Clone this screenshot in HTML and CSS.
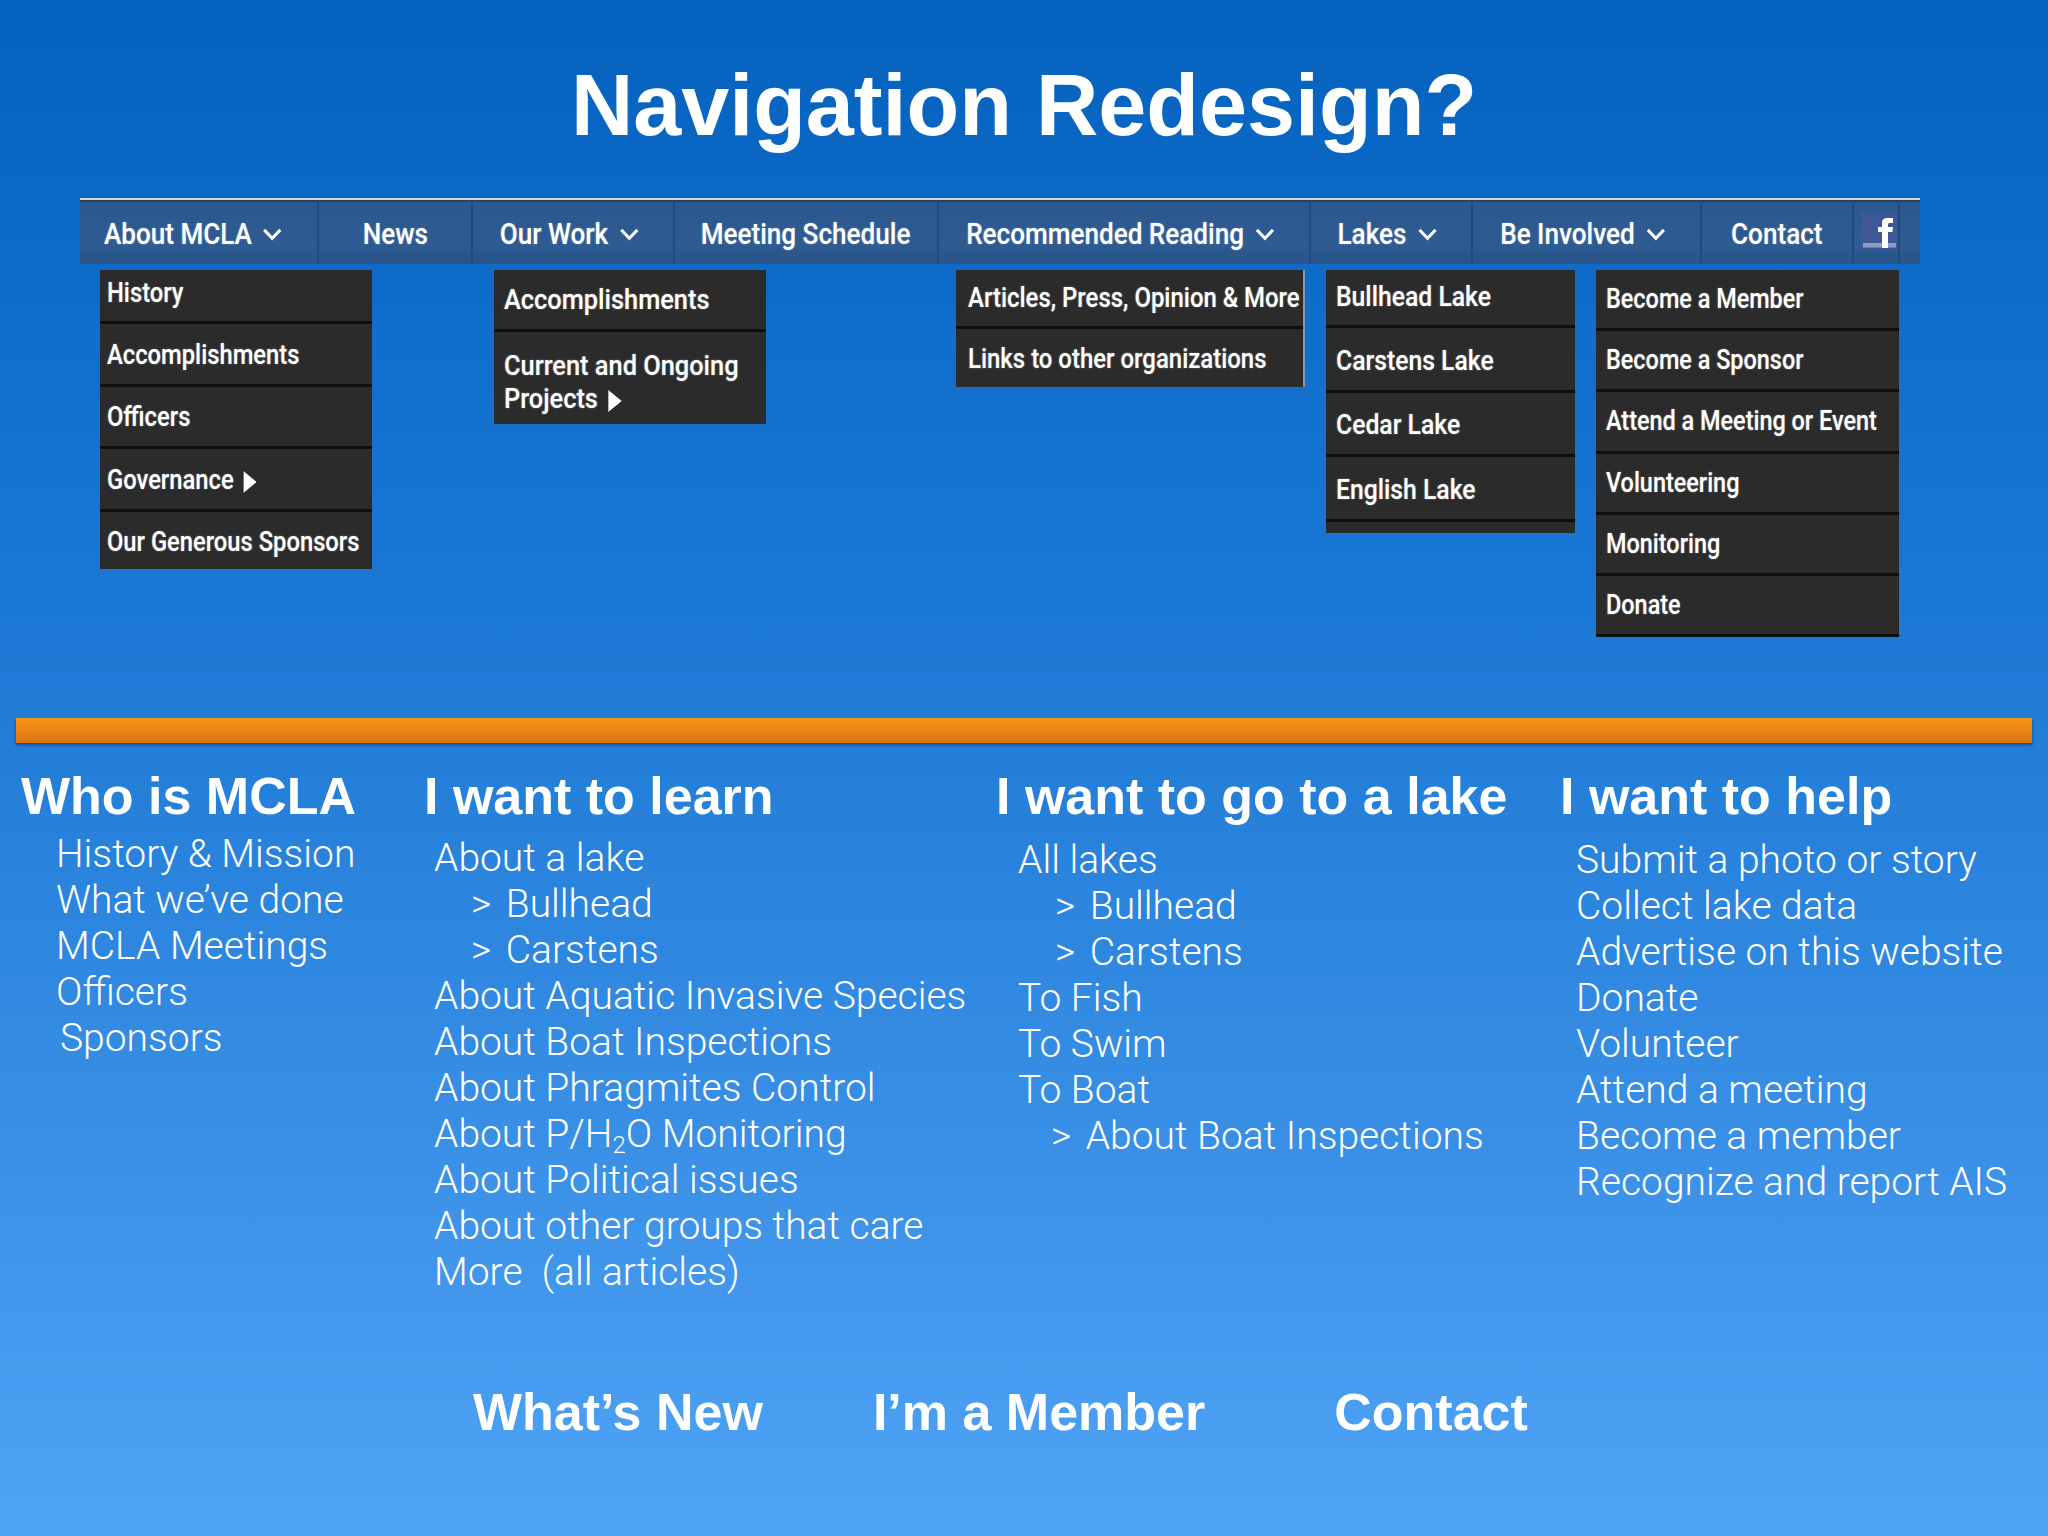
FILE: index.html
```html
<!DOCTYPE html>
<html lang="en">
<head>
<meta charset="utf-8">
<title>Navigation Redesign?</title>
<link rel="stylesheet" href="styles.css">
</head>
<body>
<header class="title-area"><h1 class="title">Navigation Redesign?</h1></header>

<nav class="navbar">
  <a class="nav-item has-menu first"><span class="nav-inner">About MCLA <svg class="chev" viewBox="0 0 16 10" preserveAspectRatio="none"><path d="M1.500 1.500l6.500 6.500 6.500-6.500"/></svg></span></a>
  <a class="nav-item"><span class="nav-inner">News</span></a>
  <a class="nav-item has-menu"><span class="nav-inner">Our Work <svg class="chev" viewBox="0 0 16 10" preserveAspectRatio="none"><path d="M1.500 1.500l6.500 6.500 6.500-6.500"/></svg></span></a>
  <a class="nav-item"><span class="nav-inner">Meeting Schedule</span></a>
  <a class="nav-item has-menu"><span class="nav-inner">Recommended Reading <svg class="chev" viewBox="0 0 16 10" preserveAspectRatio="none"><path d="M1.500 1.500l6.500 6.500 6.500-6.500"/></svg></span></a>
  <a class="nav-item has-menu"><span class="nav-inner">Lakes <svg class="chev" viewBox="0 0 16 10" preserveAspectRatio="none"><path d="M1.500 1.500l6.500 6.500 6.500-6.500"/></svg></span></a>
  <a class="nav-item has-menu"><span class="nav-inner">Be Involved <svg class="chev" viewBox="0 0 16 10" preserveAspectRatio="none"><path d="M1.500 1.500l6.500 6.500 6.500-6.500"/></svg></span></a>
  <a class="nav-item"><span class="nav-inner">Contact</span></a>
  <a class="nav-item fb-cell">
    <svg class="fb" viewBox="0 0 36 36"><rect width="36" height="36" fill="#3f5797"/><rect x="2" y="30" width="33" height="4.500" fill="#8f9cc4"/><path d="M21 35V19h-4v-5h4v-4c0-4 2.500-5 6-5h5v5h-3c-1.500 0-2 .5-2 2v2h5l-.6 5h-4.400v16z" fill="#fff"/></svg>
  </a>
</nav>

<section class="menus">
  <ul class="menu m1">
    <li><span class="lbl">History</span></li>
    <li><span class="lbl">Accomplishments</span></li>
    <li><span class="lbl">Officers</span></li>
    <li><span class="lbl">Governance <svg class="tri" viewBox="0 0 10 20" preserveAspectRatio="none"><path d="M0 0l10 10-10 10z"/></svg></span></li>
    <li class="end"><span class="lbl">Our Generous Sponsors</span></li>
  </ul>
  <ul class="menu m2">
    <li class="r1"><span class="lbl">Accomplishments</span></li>
    <li class="r2"><span class="lbl">Current and Ongoing<br>Projects <svg class="tri" viewBox="0 0 10 20" preserveAspectRatio="none"><path d="M0 0l10 10-10 10z"/></svg></span></li>
  </ul>
  <ul class="menu m3">
    <li><span class="lbl">Articles, Press, Opinion &amp; More</span></li>
    <li class="end"><span class="lbl">Links to other organizations</span></li>
  </ul>
  <ul class="menu m4">
    <li><span class="lbl">Bullhead Lake</span></li>
    <li><span class="lbl">Carstens Lake</span></li>
    <li><span class="lbl">Cedar Lake</span></li>
    <li><span class="lbl">English Lake</span></li>
    <li class="stub"></li>
  </ul>
  <ul class="menu m5">
    <li><span class="lbl">Become a Member</span></li>
    <li><span class="lbl">Become a Sponsor</span></li>
    <li><span class="lbl">Attend a Meeting or Event</span></li>
    <li><span class="lbl">Volunteering</span></li>
    <li><span class="lbl">Monitoring</span></li>
    <li><span class="lbl">Donate</span></li>
  </ul>
</section>

<div class="rule"></div>

<section class="columns">
  <div class="col c1">
    <h2 class="col-head">Who is MCLA</h2>
    <ul class="links">
      <li>History &amp; Mission</li>
      <li>What we’ve done</li>
      <li>MCLA Meetings</li>
      <li>Officers</li>
      <li class="nudge">Sponsors</li>
    </ul>
  </div>
  <div class="col c2">
    <h2 class="col-head">I want to learn</h2>
    <ul class="links">
      <li>About a lake</li>
      <li class="sub-item">&gt; <span class="sub-text">Bullhead</span></li>
      <li class="sub-item">&gt; <span class="sub-text">Carstens</span></li>
      <li>About Aquatic Invasive Species</li>
      <li>About Boat Inspections</li>
      <li>About Phragmites Control</li>
      <li>About P/H<sub class="low">2</sub>O Monitoring</li>
      <li>About Political issues</li>
      <li>About other groups that care</li>
      <li>More&nbsp; (all articles)</li>
    </ul>
  </div>
  <div class="col c3">
    <h2 class="col-head">I want to go to a lake</h2>
    <ul class="links">
      <li>All lakes</li>
      <li class="sub-item">&gt; <span class="sub-text">Bullhead</span></li>
      <li class="sub-item">&gt; <span class="sub-text">Carstens</span></li>
      <li>To Fish</li>
      <li>To Swim</li>
      <li>To Boat</li>
      <li class="sub-item tight">&gt; <span class="sub-text">About Boat Inspections</span></li>
    </ul>
  </div>
  <div class="col c4">
    <h2 class="col-head">I want to help</h2>
    <ul class="links">
      <li>Submit a photo or story</li>
      <li>Collect lake data</li>
      <li>Advertise on this website</li>
      <li>Donate</li>
      <li>Volunteer</li>
      <li>Attend a meeting</li>
      <li>Become a member</li>
      <li>Recognize and report AIS</li>
    </ul>
  </div>
</section>

<footer class="bottom">
  <a class="bottom-link">What’s New</a>
  <a class="bottom-link">I’m a Member</a>
  <a class="bottom-link">Contact</a>
</footer>
</body>
</html>
```

FILE: styles.css
```css
* { box-sizing: border-box; }
html, body { margin: 0; padding: 0; }
body {
  width: 2048px;
  height: 1536px;
  overflow: hidden;
  background: linear-gradient(180deg, #0461bd 0%, #1b78d4 40%, #3a90e6 75%, #50a4f7 100%);
  font-family: "Liberation Sans", Arial, sans-serif;
  color: #fff;
}
ul { list-style: none; margin: 0; padding: 0; }

.title-area { height: 198px; padding-top: 54px; text-align: center; }
.title { margin: 0; font-size: 86.300px; line-height: 102px; font-weight: 700; }

.navbar {
  display: grid;
  grid-template-columns: 239px 154px 202px 264px 372px 162px 229px 152px 46px;
  width: 1840px;
  height: 66px;
  margin-left: 80px;
  border-top: 2px solid #c9d8ea;
  background: linear-gradient(180deg, #2b588e 0%, #2d5b92 70%, #27528a 100%);
  font-family: Roboto, sans-serif;
  font-weight: 500;
  font-size: 29px;
  box-shadow: inset 0 2px 0 #3a3f46;
}
.nav-item {
  display: flex;
  align-items: center;
  justify-content: center;
  padding-top: 4px;
  border-right: 2px solid #1e4a80;
  white-space: nowrap;
  text-shadow: 0 0 2px rgba(255,255,255,.35);
}
.nav-inner {
  display: inline-flex;
  flex: none;
  align-items: center;
  gap: 12px;
  transform: scaleX(.9);
}
.has-menu { padding-right: 8px; }
.has-menu.first { padding-right: 11px; }
.chev { width: 22px; height: 13px; fill: none; stroke: #fff; stroke-width: 2.400; }
.fb-cell { justify-content: flex-start; padding: 0 0 0 7px; }
.fb { width: 36px; height: 36px; margin-top: -2px; }

.menus {
  display: flex;
  align-items: flex-start;
  height: 454px;
  padding: 6px 0 0 100px;
  font-family: Roboto, sans-serif;
  font-weight: 500;
  white-space: nowrap;
}
.menu { background: #2b2b2b; font-size: 27px; text-shadow: 0 0 2px rgba(255,255,255,.4); }
.menu li {
  display: flex;
  align-items: center;
  border-bottom: 3px solid #0e0e0e;
  padding-left: 7px;
}
.menu li.end { border-bottom: 0; }
.lbl { display: inline-block; flex: none; transform-origin: left center; }
.tri { width: 15px; height: 22px; margin-left: 4px; fill: #fff; vertical-align: -4px; }

.m1 { width: 272px; }
.m1 .lbl { transform: scaleX(.88); }
.m1 li { height: 62.500px; padding-top: 2px; }
.m1 li:first-child { height: 54px; padding-top: 0; padding-bottom: 6px; }
.m1 li.end { height: 57px; padding-top: 3px; }

.m2 { width: 272px; margin-left: 122px; font-size: 28px; }
.m2 .lbl { transform: scaleX(.906); }
.m2 li { padding-left: 10px; }
.m2 li.r1 { height: 62px; }
.m2 li.r2 { display: block; height: 92px; padding-top: 17px; line-height: 33px; border-bottom: 0; }

.m3 { width: 349px; margin-left: 190px; border-right: 2px solid #8a98a8; }
.m3 .lbl { transform: scaleX(.887); }
.m3 li { height: 59px; padding-left: 12px; }
.m3 li.end { height: 58px; padding-top: 1px; }

.m4 { width: 249px; margin-left: 21px; }
.m4 .lbl { transform: scaleX(.916); }
.m4 li { height: 64.500px; padding-left: 10px; padding-top: 4px; }
.m4 li:first-child { height: 58px; padding-top: 0; padding-bottom: 2px; }
.m4 li.stub { height: 11px; border-bottom: 0; padding-top: 0; }

.m5 { width: 303px; margin-left: 21px; }
.m5 .lbl { transform: scaleX(.868); }
.m5 li { height: 61.200px; padding-left: 10px; }

.rule {
  width: 2016px;
  height: 25px;
  margin-left: 16px;
  background: linear-gradient(180deg, #f59518 0%, #ea8515 50%, #d9730f 100%);
  box-shadow: 0 2px 3px rgba(10,40,80,.6);
}

.columns { display: flex; align-items: flex-start; padding: 23px 0 0 21px; height: 639px; }
.col-head { margin: 0; font-size: 52px; line-height: 60px; font-weight: 700; white-space: nowrap; }
.links { font-family: Roboto, sans-serif; font-weight: 300; font-size: 39px; line-height: 46px; white-space: nowrap; }
.c1 { width: 403px; }
.c2 { width: 572px; }
.c3 { width: 564px; }
.c4 { width: 460px; }
.c1 .links { padding: 5px 0 0 35px; }
.c2 .links { padding: 9px 0 0 10px; }
.c3 .links { padding: 11px 0 0 22px; }
.c4 .links { padding: 11px 0 0 16px; }
.nudge { padding-left: 4px; }
.sub-item { padding-left: 37px; }
.sub-item.tight { padding-left: 33px; }
.sub-text { margin-left: 5px; }
.low { font-size: 24px; line-height: 0; vertical-align: -6px; }

.bottom { display: flex; padding-left: 473px; font-size: 52px; font-weight: 700; line-height: 60px; }
.bottom-link { white-space: nowrap; margin-right: 110px; }
.bottom-link:nth-child(2) { margin-right: 129px; }
```
